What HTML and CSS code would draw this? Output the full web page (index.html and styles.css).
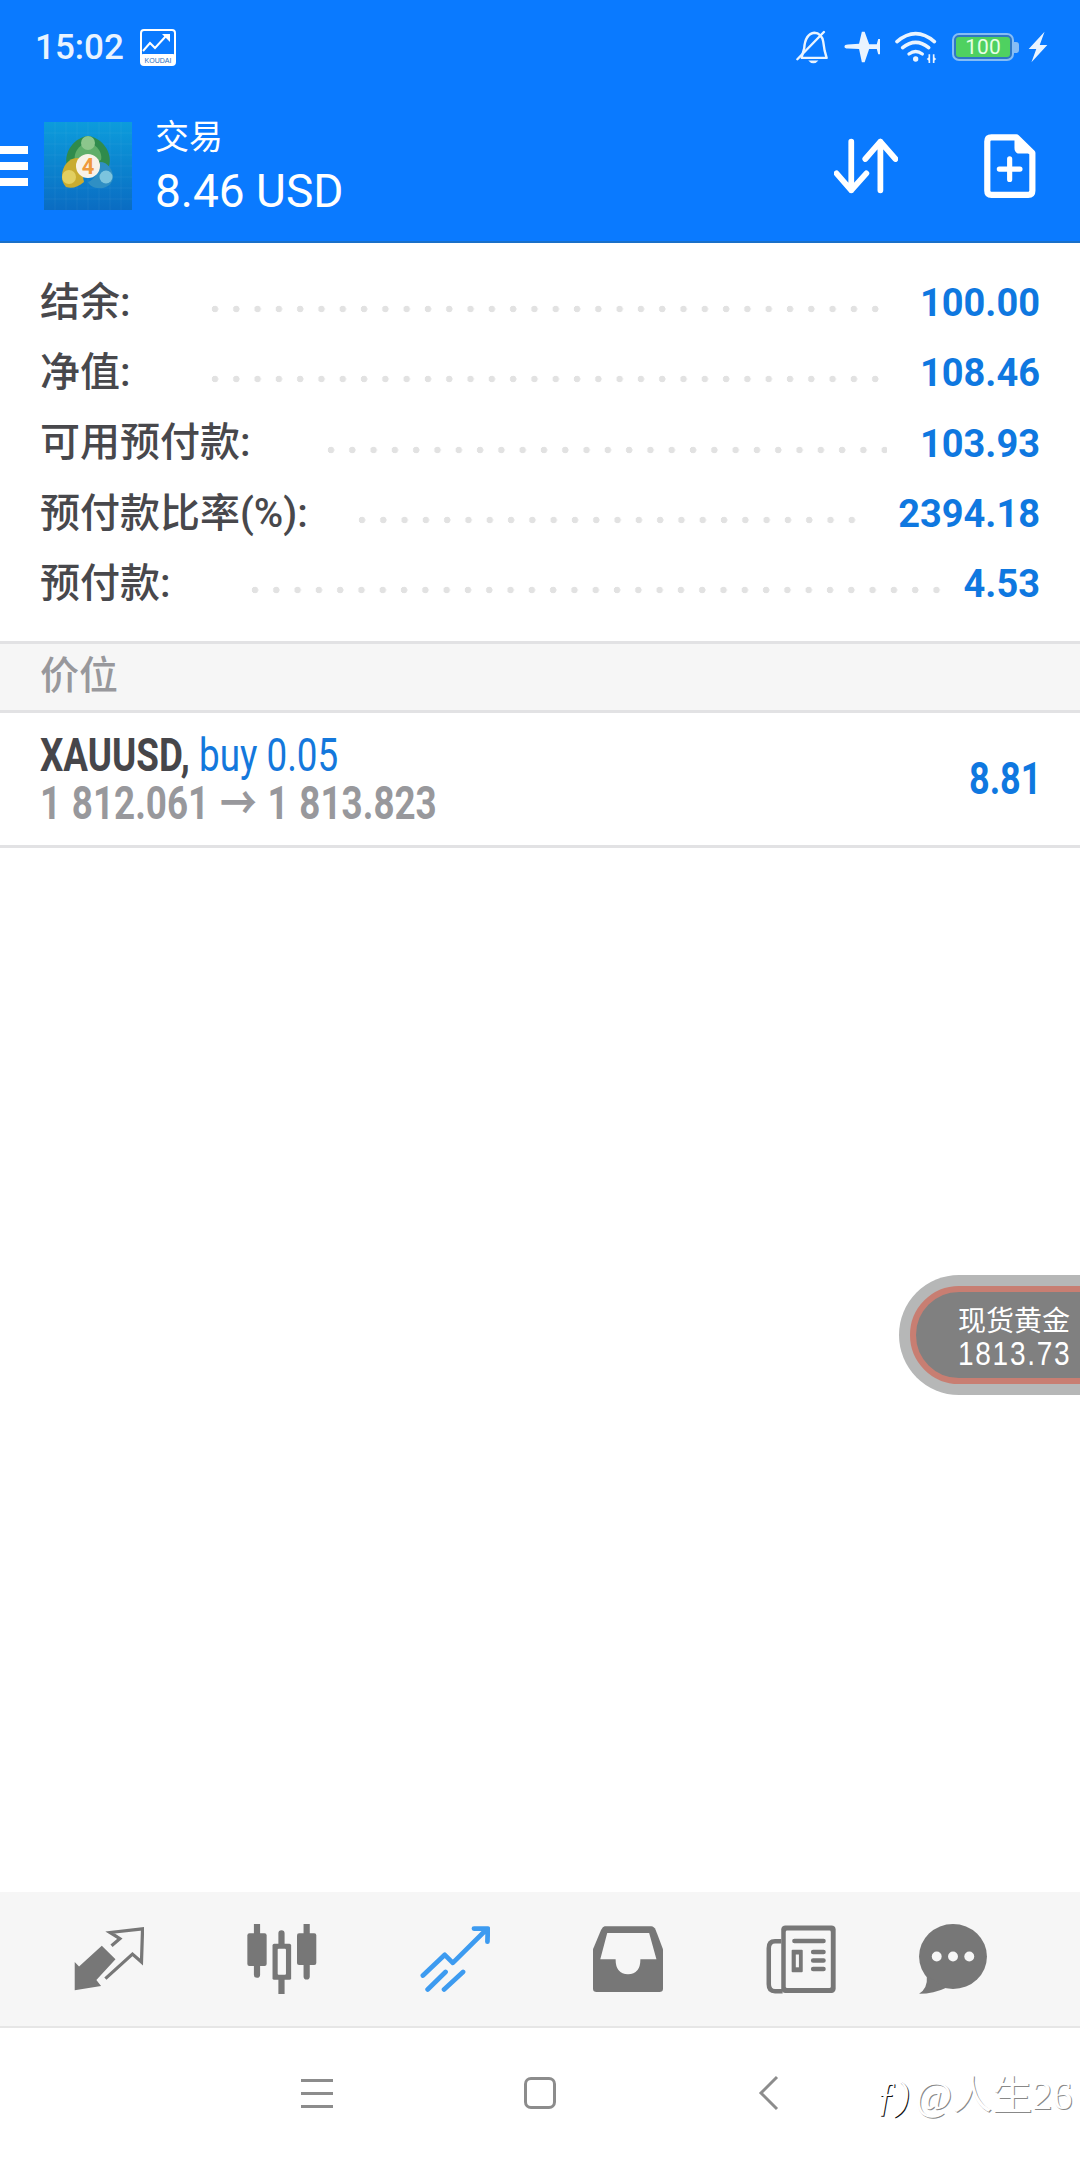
FILE: index.html
```html
<!DOCTYPE html>
<html lang="zh">
<head>
<meta charset="utf-8">
<title>交易</title>
<link rel="stylesheet" href="styles.css">
</head>
<body>
<div class="page">
  <header class="header">
    <div class="status">
      <span class="time">15:02</span>
      <svg class="koudai" viewBox="0 0 36 37">
        <rect x="1" y="1" width="34" height="35" rx="3" fill="none" stroke="#fff" stroke-width="2"/>
        <rect x="1" y="25" width="34" height="11" rx="2" fill="#fff"/>
        <path d="M3 22l7-8 5 5 11-12" fill="none" stroke="#fff" stroke-width="2"/>
        <path d="M22 5h8v8z" fill="#fff"/>
        <text x="18" y="34" class="koudai-text" text-anchor="middle">KOUDAI</text>
      </svg>
      <div class="status-icons">
        <svg class="ic-bell" viewBox="745 90 92 100">
          <path d="M760 172l8-28c2-28 14-44 30-46 14 0 24 12 26 26l4 26 6 22H758" fill="none" stroke="#eaf4ff" stroke-width="7" stroke-linejoin="round"/>
          <path d="M748 176l78-80" stroke="#eaf4ff" stroke-width="7" stroke-linecap="round"/>
          <path d="M780 180h30q-6 8-15 8t-15-8z" fill="#eaf4ff"/>
        </svg>
        <svg class="ic-plane" viewBox="882 95 104 92">
          <path d="M885 140q0-6 10-6l32-2 8-35h8l13 36h22l4-15h6v44h-6l-4-15h-22l-13 38h-8l-8-38-32-2q-10 0-10-5z" fill="#eaf4ff"/>
        </svg>
        <svg class="ic-wifi" viewBox="1030 93 126 102">
          <path d="M1036 128q56-48 112 0" fill="none" stroke="#eaf4ff" stroke-width="11" stroke-linecap="round"/>
          <path d="M1053 146q39-32 78 0" fill="none" stroke="#eaf4ff" stroke-width="11" stroke-linecap="round"/>
          <path d="M1072 165q20-15 40 0" fill="none" stroke="#eaf4ff" stroke-width="10" stroke-linecap="round"/>
          <circle cx="1092" cy="180" r="8" fill="#eaf4ff"/>
          <path d="M1133 166v26M1146 166v26" stroke="#eaf4ff" stroke-width="5"/>
          <path d="M1133 174l-8 6 8 6zM1146 174l8 6-8 6z" fill="#eaf4ff"/>
        </svg>
        <div class="battery">
          <div class="battery-body"><span class="battery-level">100</span></div>
          <div class="battery-cap"></div>
        </div>
        <svg class="ic-bolt" viewBox="1416 95 58 92">
          <path d="M1464 97l-46 50h22l-14 38 46-50h-22z" fill="#eaf4ff"/>
        </svg>
      </div>
    </div>
    <div class="toolbar">
      <div class="burger"><span></span><span></span><span></span></div>
      <svg class="logo" viewBox="0 0 88 88">
        <defs>
          <linearGradient id="logobg" x1="0" y1="0" x2="0" y2="1">
            <stop offset="0" stop-color="#0c9cdc"/>
            <stop offset="1" stop-color="#0a6cc2"/>
          </linearGradient>
        </defs>
        <rect width="88" height="88" fill="url(#logobg)"/>
        <path d="M11 0v88M22 0v88M33 0v88M44 0v88M55 0v88M66 0v88M77 0v88M0 11h88M0 22h88M0 33h88M0 44h88M0 55h88M0 66h88M0 77h88" stroke="#fff" stroke-opacity="0.05"/>
        <path d="M23 44C19 30 31 15 44 14c13 1 25 16 21 30l-10 4H33z" fill="#2f8b4c"/>
        <path d="M31 38c-2-8 6-17 13-17s15 9 13 17l-13 6z" fill="#5fae6a"/>
        <circle cx="44" cy="21" r="7" fill="#8cc68c"/>
        <path d="M18 54c0-11 8-19 17-18l5 24c-6 5-12 7-18 5-3-3-4-7-4-11z" fill="#c9ac30"/>
        <circle cx="25" cy="55" r="7" fill="#e2cf60"/>
        <path d="M44 60c6-2 11-10 12-20 8 0 13 8 13 15 0 7-7 12-14 11-5 0-9-2-11-6z" fill="#2f8fc4"/>
        <circle cx="62" cy="55" r="6.5" fill="#7cc4de"/>
        <circle cx="44" cy="44" r="12" fill="#f8f2e8"/>
        <text x="44" y="52" class="logo-num" text-anchor="middle">4</text>
      </svg>
      <div class="titles">
        <span class="title-small">交易</span>
        <span class="title-big">8.46 USD</span>
      </div>
      <svg class="ic-arrows" viewBox="855 420 178 155">
        <path d="M903 430v135M862 518l41 47 42-47M984 565V430M942 478l42-48 42 48" fill="none" stroke="#fff" stroke-width="16" stroke-linecap="round" stroke-linejoin="round"/>
      </svg>
      <svg class="ic-doc" viewBox="1285 405 148 186">
        <path d="M1305 415h73l46 45v110q0 12-12 12h-107q-12 0-12-12V427q0-12 12-12z" fill="none" stroke="#fff" stroke-width="18" stroke-linejoin="round"/>
        <path d="M1372 412l56 50h-40q-16 0-16-16z" fill="#fff"/>
        <path d="M1328 507h60M1358 477v60" stroke="#fff" stroke-width="15" stroke-linecap="round"/>
      </svg>
    </div>
  </header>

  <section class="summary">
    <div class="row"><span class="label">结余:</span><span class="dots"></span><span class="value">100.00</span></div>
    <div class="row"><span class="label">净值:</span><span class="dots"></span><span class="value">108.46</span></div>
    <div class="row"><span class="label">可用预付款:</span><span class="dots dots-mid"></span><span class="value">103.93</span></div>
    <div class="row"><span class="label">预付款比率(%):</span><span class="dots dots-tight"></span><span class="value">2394.18</span></div>
    <div class="row"><span class="label">预付款:</span><span class="dots dots-short"></span><span class="value">4.53</span></div>
  </section>

  <div class="section-head">价位</div>

  <div class="position">
    <div class="pos-text">
      <div class="pos-line"><b class="symbol">XAUUSD,</b> <span class="side">buy 0.05</span></div>
      <div class="pos-line prices">1 812.061 → 1 813.823</div>
    </div>
    <span class="profit">8.81</span>
  </div>

  <div class="spacer"></div>

  <nav class="tabs">
    <div class="tab">
      <svg class="tab-icon" viewBox="218 155 194 173">
        <path d="M220 250l12 12 63-57 38 37-53 58 13 16-73 12z" fill="#777"/>
        <path d="M322 205l23-20-27-17 90-10-3 92-25-22-75 68" fill="none" stroke="#777" stroke-width="9"/>
      </svg>
    </div>
    <div class="tab">
      <svg class="tab-icon" viewBox="715 138 203 203">
        <path d="M744 140v145M888 138v152M815 165v175" stroke="#777" stroke-width="18" stroke-linecap="round"/>
        <rect x="716" y="165" width="56" height="95" rx="6" fill="#777"/>
        <rect x="860" y="165" width="56" height="92" rx="6" fill="#777"/>
        <rect x="789" y="195" width="54" height="105" rx="5" fill="#777"/>
        <rect x="804" y="210" width="24" height="75" rx="3" fill="#f6f6f6"/>
      </svg>
    </div>
    <div class="tab">
      <svg class="tab-icon" viewBox="1222 145 192 183">
        <path d="M1230 282l60-57 22 22 93-92M1370 153h38l-1 36M1243 320l49-48M1288 320l52-48" fill="none" stroke="#3d9bf0" stroke-width="13" stroke-linecap="round" stroke-linejoin="round"/>
      </svg>
    </div>
    <div class="tab">
      <svg class="tab-icon" viewBox="158 145 192 183">
        <path d="M190 147h128q7 0 12 10l20 53v108q0 9-10 9H168q-10 0-10-9V210l22-53q5-10 10-10z" fill="#777"/>
        <path d="M197 165h115l20 72h-44q0 41-34 41t-34-41h-42z" fill="#f6f6f6"/>
      </svg>
    </div>
    <div class="tab">
      <svg class="tab-icon" viewBox="656 138 202 198">
        <rect x="700" y="140" width="157" height="195" rx="12" fill="#777"/>
        <rect x="713" y="155" width="130" height="166" rx="4" fill="#f6f6f6"/>
        <path d="M700 186h-18q-18 0-18 20v104q0 20 18 20h22" fill="none" stroke="#777" stroke-width="13"/>
        <path d="M738 185h84M792 217h30M792 241h30M792 266h30" stroke="#777" stroke-width="13" stroke-linecap="round"/>
        <rect x="730" y="210" width="32" height="65" rx="3" fill="#777"/>
        <rect x="742" y="224" width="9" height="37" fill="#f6f6f6"/>
      </svg>
    </div>
    <div class="tab">
      <svg class="tab-icon" viewBox="1103 138 192 198">
        <ellipse cx="1199" cy="230" rx="96" ry="92" fill="#777"/>
        <path d="M1125 285q3 35-22 50 42 0 77-17z" fill="#777"/>
        <circle cx="1153" cy="230" r="14" fill="#f6f6f6"/>
        <circle cx="1199" cy="230" r="14" fill="#f6f6f6"/>
        <circle cx="1245" cy="230" r="14" fill="#f6f6f6"/>
      </svg>
    </div>
  </nav>

  <div class="sysnav">
    <div class="sys-menu"><span></span><span></span><span></span></div>
    <div class="sys-home"></div>
    <svg class="sys-back" viewBox="0 0 22 36">
      <path d="M19 2L3 18l16 16" fill="none" stroke="#8c8c8c" stroke-width="3"/>
    </svg>
  </div>

  <div class="ticker">
    <div class="ticker-ring">
      <div class="ticker-inner">
        <span class="ticker-name">现货黄金</span>
        <span class="ticker-price">1813.73</span>
      </div>
    </div>
  </div>

  <div class="watermark"><span class="wm-mark">ƒ)</span>@人生26</div>
</div>
</body>
</html>
```
FILE: styles.css
```css
* { box-sizing: border-box; }
html, body { margin: 0; padding: 0; }
body {
  width: 1080px;
  height: 2158px;
  overflow: hidden;
  background: #fff;
  font-family: Roboto, "Noto Sans CJK SC", sans-serif;
}
.page {
  position: relative;
  width: 1080px;
  height: 2158px;
  overflow: hidden;
  display: flex;
  flex-direction: column;
}

/* header */
.header {
  height: 243px;
  background: #0a7aff;
  border-bottom: 2px solid #1a70c8;
  display: flex;
  flex-direction: column;
  color: #fff;
}
.status {
  display: flex;
  align-items: center;
  height: 94px;
  padding: 0 32px 0 35px;
}
.time { font-size: 35px; font-weight: 500; color: #e8f3ff; width: 105px; }
.koudai { width: 36px; height: 37px; }
.koudai-text { font-family: "Liberation Sans", sans-serif; font-size: 7px; fill: #2a70c0; }
.status-icons { margin-left: auto; display: flex; align-items: center; }
.ic-bell { width: 32px; height: 34px; margin-right: 15px; }
.ic-plane { width: 37px; height: 32px; margin-right: 15px; }
.ic-wifi { width: 42px; height: 34px; margin-right: 15px; }
.battery { display: flex; align-items: center; margin-right: 9px; }
.battery-body {
  width: 62px;
  height: 28px;
  border: 2px solid #86bdf5;
  border-radius: 7px;
  padding: 2px;
  background: #2f77c4;
  display: flex;
}
.battery-level {
  flex: 1;
  background: #4fd160;
  border-radius: 3px;
  color: #e6ffe6;
  font-size: 21px;
  line-height: 20px;
  text-align: center;
}
.battery-cap { width: 5px; height: 11px; background: #86bdf5; border-radius: 0 3px 3px 0; }
.ic-bolt { width: 20px; height: 32px; }

.toolbar { display: flex; align-items: center; height: 147px; padding-bottom: 4px; }
.burger { width: 28px; display: flex; flex-direction: column; gap: 8px; margin-right: 16px; }
.burger span { display: block; height: 8px; background: #fff; }
.logo { width: 88px; height: 88px; margin-right: 23px; }
.logo-num { font-family: Roboto, sans-serif; font-size: 22px; font-weight: 700; fill: #ef9a3c; }
.titles { display: flex; flex-direction: column; }
.title-small { font-family: "Noto Sans CJK SC", sans-serif; font-size: 34px; line-height: 50px; }
.title-big { font-size: 46px; line-height: 62px; }
.ic-arrows { width: 64px; height: 56px; margin-left: auto; }
.ic-doc { width: 52px; height: 64px; margin-left: 86px; margin-right: 44px; }

/* summary */
.summary { padding: 22px 40px 0 40px; height: 398px; display: flex; flex-direction: column; }
.row { height: 70.3px; display: flex; align-items: center; }
.label {
  font-family: Roboto, "Noto Sans CJK SC", sans-serif;
  font-weight: 500;
  font-size: 40px;
  line-height: 50px;
  padding-top: 5px;
  color: #48484c;
  white-space: nowrap;
}
.dots {
  flex: 1;
  height: 8px;
  margin: 18px 33px 0 80px;
  background-image: radial-gradient(circle at 4px 4px, #e2e2e2 3px, transparent 3.6px);
  background-size: 21.3px 8px;
  background-repeat: repeat-x;
}
.dots-mid { margin-left: 76px; }
.dots-tight { margin-left: 50px; margin-right: 32px; }
.dots-short { margin-right: 22px; }
.value { font-size: 38px; font-weight: 700; color: #0f78e0; padding-top: 6px; }

.section-head {
  height: 72px;
  background: #f6f6f6;
  border-top: 3px solid #e2e2e4;
  border-bottom: 3px solid #e2e2e4;
  padding-left: 40px;
  font-family: "Noto Sans CJK SC", sans-serif;
  font-weight: 500;
  font-size: 39px;
  line-height: 57px;
  color: #98989c;
}

.position {
  height: 135px;
  border-bottom: 3px solid #e2e2e4;
  padding: 0 39px 0 40px;
  display: flex;
  align-items: center;
  justify-content: space-between;
}
.pos-text { width: 500px; transform: scaleX(0.8); transform-origin: left center; }
.pos-line { font-size: 46px; line-height: 48px; white-space: nowrap; }
.symbol { color: #46464a; font-weight: 700; }
.side { color: #1478dc; }
.prices { font-weight: 700; color: #98989c; word-spacing: 2px; }
.profit { font-size: 44px; font-weight: 700; color: #0f78e0; transform: scaleX(0.82); transform-origin: right center; }

.spacer { flex: 1; }

/* bottom tabs */
.tabs {
  height: 136px;
  background: #f6f6f6;
  border-bottom: 2px solid #e6e6e6;
  padding-left: 22px;
  display: grid;
  grid-template-columns: repeat(5, 173px) 132px;
  align-items: center;
}
.tab { display: flex; justify-content: center; }
.tab-icon { width: 70px; height: 70px; }

/* system nav */
.sysnav { height: 130px; position: relative; display: flex; align-items: center; }
.sys-menu { width: 32px; margin-left: 301px; display: flex; flex-direction: column; gap: 10px; }
.sys-menu span { display: block; height: 3px; background: #8c8c8c; }
.sys-home { width: 32px; height: 32px; border: 3px solid #8c8c8c; border-radius: 7px; margin-left: 191px; }
.sys-back { width: 22px; height: 36px; margin-left: 202px; }

/* floating ticker */
.ticker {
  position: absolute;
  left: 899px;
  top: 1275px;
  width: 240px;
  height: 120px;
  border-radius: 60px;
  background: #b6b7b7;
  padding: 11px;
}
.ticker-ring {
  height: 98px;
  border-radius: 49px;
  border: 6px solid #c87e72;
  background: #808080;
}
.ticker-inner {
  display: flex;
  flex-direction: column;
  color: #fff;
  padding: 10px 0 0 42px;
  font-family: "Noto Sans CJK SC", sans-serif;
}
.ticker-name { font-size: 28px; line-height: 34px; }
.ticker-price { font-size: 33px; line-height: 36px; letter-spacing: 2px; font-family: "Liberation Sans", sans-serif; transform: scaleX(0.85); transform-origin: left center; }

.watermark {
  position: absolute;
  left: 876px;
  top: 2072px;
  font-family: "Liberation Serif", "Noto Sans CJK SC", serif;
  font-size: 40px;
  line-height: 48px;
  color: #fff;
  white-space: nowrap;
  text-shadow: 1px 1px 0 #888;
}
.wm-mark { font-style: italic; margin-right: 6px; text-shadow: 1px 1px 0 #111; }
```
